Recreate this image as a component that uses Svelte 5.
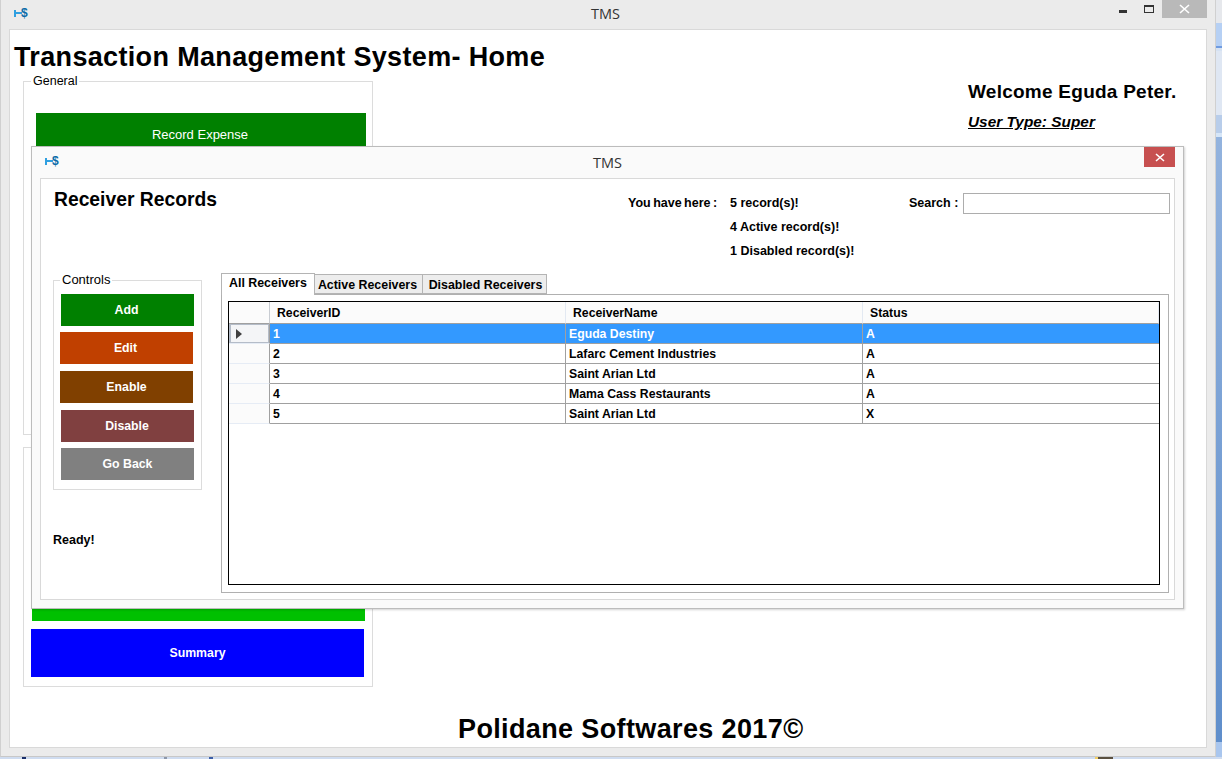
<script>
  let search = $state('');

  const controls = [
    { label: 'Add', cls: 'add' },
    { label: 'Edit', cls: 'edit' },
    { label: 'Enable', cls: 'enable' },
    { label: 'Disable', cls: 'disable' },
    { label: 'Go Back', cls: 'back' }
  ];

  const tabs = ['All Receivers', 'Active Receivers', 'Disabled Receivers'];

  const receivers = [
    { id: 1, name: 'Eguda Destiny', status: 'A' },
    { id: 2, name: 'Lafarc Cement Industries', status: 'A' },
    { id: 3, name: 'Saint Arian Ltd', status: 'A' },
    { id: 4, name: 'Mama Cass Restaurants', status: 'A' },
    { id: 5, name: 'Saint Arian Ltd', status: 'X' }
  ];
</script>

{#snippet appIcon()}
  <span class="app-icon">
    <svg width="8" height="7" viewBox="0 0 8 7" aria-hidden="true">
      <path d="M0 0h2v2h6v2H2v3H0z" fill="#2f9fe0" />
    </svg>
    <span class="dollar">$</span>
  </span>
{/snippet}

<div class="desktop">
  <div class="backdrop">
    <div class="b1"></div>
    <div class="b2"></div>
    <div class="b3"></div>
    <div class="b4"></div>
    <div class="b5"></div>
    <div class="b6"></div>
    <div class="b7"></div>
    <div class="b8"></div>
    <div class="b9"></div>
  </div>
  <div class="taskbar">
    <i class="t1"></i>
    <i class="t2"></i>
    <i class="t3"></i>
    <i class="t4"></i>
  </div>

  <!-- main window -->
  <section class="window main">
    <header class="titlebar">
      {@render appIcon()}
      <span class="caption">TMS</span>
      <div class="win-buttons">
        <span class="min"></span>
        <span class="max"></span>
        <span class="close">
          <svg width="11" height="10" viewBox="0 0 11 10" aria-hidden="true">
            <path d="M1 1l9 8M10 1L1 9" stroke="#fff" stroke-width="1.6" fill="none" />
          </svg>
        </span>
      </div>
    </header>

    <div class="main-body">
      <h1>Transaction Management System- Home</h1>

      <div class="columns">
        <div class="left">
          <fieldset class="group general">
            <legend>General</legend>
            <button class="big record">Record Expense</button>
          </fieldset>
          <div class="group second">
            <button class="big report"></button>
            <button class="big summary">Summary</button>
          </div>
        </div>
        <div class="welcome">
          <p class="hello">Welcome Eguda Peter.</p>
          <p class="user-type">User Type: Super</p>
        </div>
      </div>

      <footer>Polidane Softwares 2017©</footer>
    </div>
  </section>

  <!-- receiver records dialog -->
  <section class="window dialog">
    <header class="titlebar small">
      {@render appIcon()}
      <span class="caption">TMS</span>
      <span class="dlg-close">
        <svg width="10" height="9" viewBox="0 0 10 9" aria-hidden="true">
          <path d="M1 1l8 7M9 1L1 8" stroke="#fff" stroke-width="1.6" fill="none" />
        </svg>
      </span>
    </header>

    <div class="dlg-body">
      <div class="top-row">
        <h2>Receiver Records</h2>
        <div class="stats">
          <span class="stats-label">You have here :</span>
          <div class="stats-values">
            <div>5 record(s)!</div>
            <div>4 Active record(s)!</div>
            <div>1 Disabled record(s)!</div>
          </div>
        </div>
        <label class="search">
          <span>Search :</span>
          <input bind:value={search} />
        </label>
      </div>

      <div class="bottom-row">
        <div class="side">
          <fieldset class="controls">
            <legend>Controls</legend>
            {#each controls as c}
              <button class={c.cls}>{c.label}</button>
            {/each}
          </fieldset>
          <p class="status">Ready!</p>
        </div>

        <div class="tabs">
          <div class="tab-strip">
            {#each tabs as t, i}
              <span class="tab" class:active={i === 0}>{t}</span>
            {/each}
          </div>
          <div class="tab-panel">
            <div class="grid">
              <table>
                <colgroup>
                  <col class="c0" />
                  <col class="c1" />
                  <col class="c2" />
                  <col class="c3" />
                </colgroup>
                <thead>
                  <tr>
                    <th></th>
                    <th>ReceiverID</th>
                    <th>ReceiverName</th>
                    <th>Status</th>
                  </tr>
                </thead>
                <tbody>
                  {#each receivers as r, i}
                    <tr class:selected={i === 0}>
                      <td class="row-head">
                        {#if i === 0}
                          <svg width="6" height="10" viewBox="0 0 6 10" aria-hidden="true">
                            <path d="M0 0l6 5-6 5z" fill="#404040" />
                          </svg>
                        {/if}
                      </td>
                      <td>{r.id}</td>
                      <td>{r.name}</td>
                      <td>{r.status}</td>
                    </tr>
                  {/each}
                </tbody>
              </table>
            </div>
          </div>
        </div>
      </div>
    </div>
  </section>
</div>

<style>
  :global(body) {
    margin: 0;
    font-family: "Liberation Sans", Arial, sans-serif;
  }

  .desktop {
    position: relative;
    width: 1222px;
    height: 759px;
    overflow: hidden;
    background: #8fb0dc;
    color: #000;
  }

  .backdrop {
    margin-left: 1216px;
    height: 757px;
    display: flex;
    flex-direction: column;
  }
  .b1 { height: 23px; background: #e6e8ec; }
  .b2 { height: 23px; background: #b6d0f4; }
  .b3 { height: 2px; background: #6f9be0; }
  .b4 { height: 3px; background: #d5e2f3; }
  .b5 { height: 64px; background: #dfe7f3; }
  .b6 { height: 18px; background: #b8cdea; }
  .b7 { height: 4px; background: #d6e6f8; }
  .b8 { flex: 1; background: linear-gradient(#93b3de, #5f8ecb); }
  .b9 { height: 15px; background: #a9c6ee; }

  .taskbar {
    height: 2px;
    background: #cfdcf0;
    display: flex;
  }

  .taskbar i {
    display: block;
    height: 2px;
  }
  .t1 { width: 4px; margin-left: 22px; background: #1a2f6a; }
  .t2 { width: 3px; margin-left: 138px; background: #8c97aa; }
  .t3 { width: 4px; margin-left: 42px; background: #3c5fa8; }
  .t4 { width: 15px; margin-left: 882px; background: #5a5040; border-left: 3px solid #f2cf63; }

  .window {
    position: absolute;
    box-sizing: border-box;
  }

  .main {
    left: 0;
    top: 0;
    width: 1216px;
    height: 757px;
    background: #ebebeb;
    border-left: 1px solid #d0d0d0;
    border-right: 1px solid #d0d0d0;
    border-bottom: 1px solid #c8c8c8;
    display: flex;
    flex-direction: column;
  }

  .titlebar {
    height: 29px;
    flex: none;
    display: flex;
    align-items: center;
    position: relative;
    padding-left: 13px;
  }

  .titlebar.small {
    height: 31px;
    padding-left: 13px;
  }

  .caption {
    position: absolute;
    left: 0;
    right: 0;
    text-align: center;
    font-family: "Open Sans", sans-serif;
    font-size: 14.5px;
    color: #333;
    margin-top: -2px;
  }

  .main .caption {
    right: 5px;
  }

  .dialog .caption {
    margin-top: 0;
  }

  .app-icon {
    display: flex;
    align-items: center;
    position: relative;
    z-index: 1;
    height: 10px;
    margin-top: -3px;
  }

  .dollar {
    font: bold 12px/10px "Liberation Sans", sans-serif;
    color: #0b6ca8;
    margin-left: -1px;
  }

  .win-buttons {
    margin-left: auto;
    margin-right: 8px;
    height: 100%;
    display: flex;
    align-items: flex-start;
  }

  .min {
    width: 8px;
    height: 3px;
    margin-top: 10px;
    margin-right: 17px;
    background: #333;
  }

  .max {
    width: 8px;
    height: 5px;
    margin-top: 5px;
    margin-right: 8px;
    border: 1px solid #333;
    border-top-width: 2px;
  }

  .close {
    width: 45px;
    height: 18px;
    background: #b9b9b9;
    display: flex;
    align-items: center;
    justify-content: center;
  }

  .main-body {
    margin: 0 8px 8px 8px;
    flex: 1;
    background: #fff;
    border: 1px solid #d9d9d9;
    padding: 0 0 0 4px;
    min-height: 0;
  }

  h1 {
    margin: 12px 0 2px;
    font-size: 27px;
    line-height: 30px;
    letter-spacing: 0.34px;
    font-weight: bold;
  }

  .columns {
    display: flex;
  }

  .left {
    margin-left: 9px;
    width: 350px;
    display: flex;
    flex-direction: column;
    gap: 12px;
  }

  .group {
    box-sizing: border-box;
    margin: 0;
    border: 1px solid #dcdcdc;
    min-width: 0;
  }

  legend {
    padding: 0 2px;
    font-size: 12.5px;
    line-height: 14px;
  }

  .general legend {
    margin-left: -5px;
  }

  .general {
    height: 361px;
    padding: 25px 0 0 12px;
  }

  .second {
    height: 240px;
    padding: 0 0 9px 7px;
    display: flex;
    flex-direction: column;
    justify-content: flex-end;
    gap: 8px;
  }

  button {
    display: block;
    border: none;
    padding: 0 2px 0 0;
    color: #fff;
    font-family: inherit;
    font-size: 12.3px;
    font-weight: bold;
  }

  .big { height: 43px; }

  .record {
    width: 330px;
    background: #008000;
    font-weight: normal;
    font-size: 13px;
  }

  .report {
    width: 333px;
    height: 48px;
    margin-left: 1px;
    background: #00c000;
  }

  .summary {
    width: 333px;
    height: 48px;
    padding: 0;
    background: #0000ff;
  }

  .welcome {
    margin-left: 595px;
    padding-top: 6px;
  }

  .hello {
    margin: 0;
    font-size: 19px;
    line-height: 24px;
    letter-spacing: 0.25px;
    font-weight: bold;
  }

  .user-type {
    margin: 9px 0 0;
    font-size: 15.4px;
    line-height: 18px;
    font-weight: bold;
    font-style: italic;
    text-decoration: underline;
  }

  footer {
    margin: 27px 0 0 444px;
    font-size: 27px;
    line-height: 30px;
    letter-spacing: 0.37px;
    font-weight: bold;
  }

  .dialog {
    left: 31px;
    top: 146px;
    width: 1153px;
    height: 463px;
    background: #fafafa;
    border: 1px solid #bcbcbc;
    box-shadow: 1px 1px 2px rgba(0, 0, 0, 0.18);
    display: flex;
    flex-direction: column;
  }

  .dlg-close {
    position: absolute;
    top: 0;
    right: 8px;
    width: 31px;
    height: 20px;
    background: #c75050;
    display: flex;
    align-items: center;
    justify-content: center;
  }

  .dlg-body {
    flex: 1;
    margin: 0 8px 8px;
    background: #fff;
    border: 1px solid #d9d9d9;
    display: flex;
    flex-direction: column;
    min-height: 0;
  }

  .top-row {
    height: 94px;
    flex: none;
    display: flex;
    font-size: 12.5px;
    font-weight: bold;
  }

  h2 {
    margin: 9px 0 0 13px;
    width: 574px;
    font-size: 19.3px;
    line-height: 24px;
    font-weight: bold;
  }

  .stats {
    display: flex;
    padding-top: 12px;
    width: 281px;
    line-height: 24px;
  }

  .stats-label {
    width: 102px;
    word-spacing: -1px;
  }

  .search {
    display: flex;
    align-items: flex-start;
    padding-top: 12px;
    line-height: 24px;
  }

  .search span {
    width: 54px;
  }

  .search input {
    box-sizing: border-box;
    margin: 2px 0 0;
    width: 207px;
    height: 21px;
    padding: 0 3px;
    border: 1px solid #adadad;
    background: #fff;
    outline: none;
    font: inherit;
  }

  .bottom-row {
    flex: 1;
    display: flex;
    padding-left: 12px;
    min-height: 0;
  }

  .side {
    width: 168px;
    flex: none;
  }

  .controls {
    box-sizing: border-box;
    width: 149px;
    height: 217px;
    margin: 0;
    padding: 7px 0 0 7px;
    border: 1px solid #dcdcdc;
    min-width: 0;
  }

  .controls legend {
    margin-left: -1px;
    font-size: 13px;
  }

  .controls button {
    width: 133px;
    height: 32px;
    margin-bottom: 6px;
  }

  .controls .add { background: #008000; }
  .controls .edit { background: #c04000; margin-left: -1px; margin-bottom: 7px; }
  .controls .enable { background: #804000; margin-left: -1px; margin-bottom: 7px; padding: 0; }
  .controls .disable { background: #804040; padding: 0 1px 0 0; }
  .controls .back { background: #808080; padding: 0; }

  .status {
    margin: 43px 0 0;
    font-size: 12.5px;
    line-height: 14px;
    font-weight: bold;
  }

  .tabs {
    width: 948px;
    display: flex;
    flex-direction: column;
  }

  .tab-strip {
    height: 22px;
    display: flex;
    align-items: flex-end;
    position: relative;
    z-index: 1;
    font-size: 12.4px;
    font-weight: bold;
  }

  .tab {
    box-sizing: border-box;
    height: 20px;
    margin-bottom: 1px;
    padding-right: 2px;
    line-height: 20px;
    background: #ededed;
    border: 1px solid #b4b4b4;
    border-left: none;
    white-space: nowrap;
    text-align: center;
    width: 108px;
  }

  .tab:last-child {
    width: 124px;
    padding: 0 0 0 2px;
  }

  .tab.active {
    height: 22px;
    margin-bottom: 0;
    width: 94px;
    padding: 0 0 0 7px;
    line-height: 18px;
    text-align: left;
    background: #fff;
    border: 1px solid #b4b4b4;
    border-bottom: none;
  }

  .tab-panel {
    box-sizing: border-box;
    height: 299px;
    margin-top: -1px;
    padding: 6px 7px 6px 6px;
    border: 1px solid #b0b0b0;
  }

  .grid {
    box-sizing: border-box;
    height: 284px;
    width: 932px;
    border: 1px solid #000;
    background: #fff;
  }

  table {
    table-layout: fixed;
    width: 930px;
    border-collapse: separate;
    border-spacing: 0;
    font-size: 12.25px;
    font-weight: bold;
  }

  .c0 { width: 41px; }
  .c1 { width: 296px; }
  .c2 { width: 297px; }
  .c3 { width: 296px; }

  th {
    box-sizing: border-box;
    height: 22px;
    padding: 0 0 0 7px;
    text-align: left;
    font-weight: bold;
    background: #fbfbfb;
    border-bottom: 1px solid #a0a0a0;
    border-right: 1px solid #e3e9f2;
  }

  th:first-child {
    border-right-color: #c8ccd2;
  }

  td {
    box-sizing: border-box;
    height: 20px;
    padding: 0 0 0 3px;
    border-bottom: 1px solid #a0a0a0;
    border-right: 1px solid #a0a0a0;
    line-height: 18px;
  }

  td:last-child {
    border-right: none;
  }

  td.row-head {
    background: #fbfbfb;
    border-bottom: 1px solid #e6ecf5;
    border-right: 1px solid #a0a0a0;
    padding: 0 0 0 7px;
  }

  td.row-head svg {
    display: block;
  }

  tr.selected td {
    background: #3399ff;
    color: #fff;
  }

  tr.selected td.row-head {
    background: #f4f5f7;
    box-shadow: inset 2px 1px 0 #b4bcc8, inset -1px -1px 0 #b4bcc8;
  }
</style>
